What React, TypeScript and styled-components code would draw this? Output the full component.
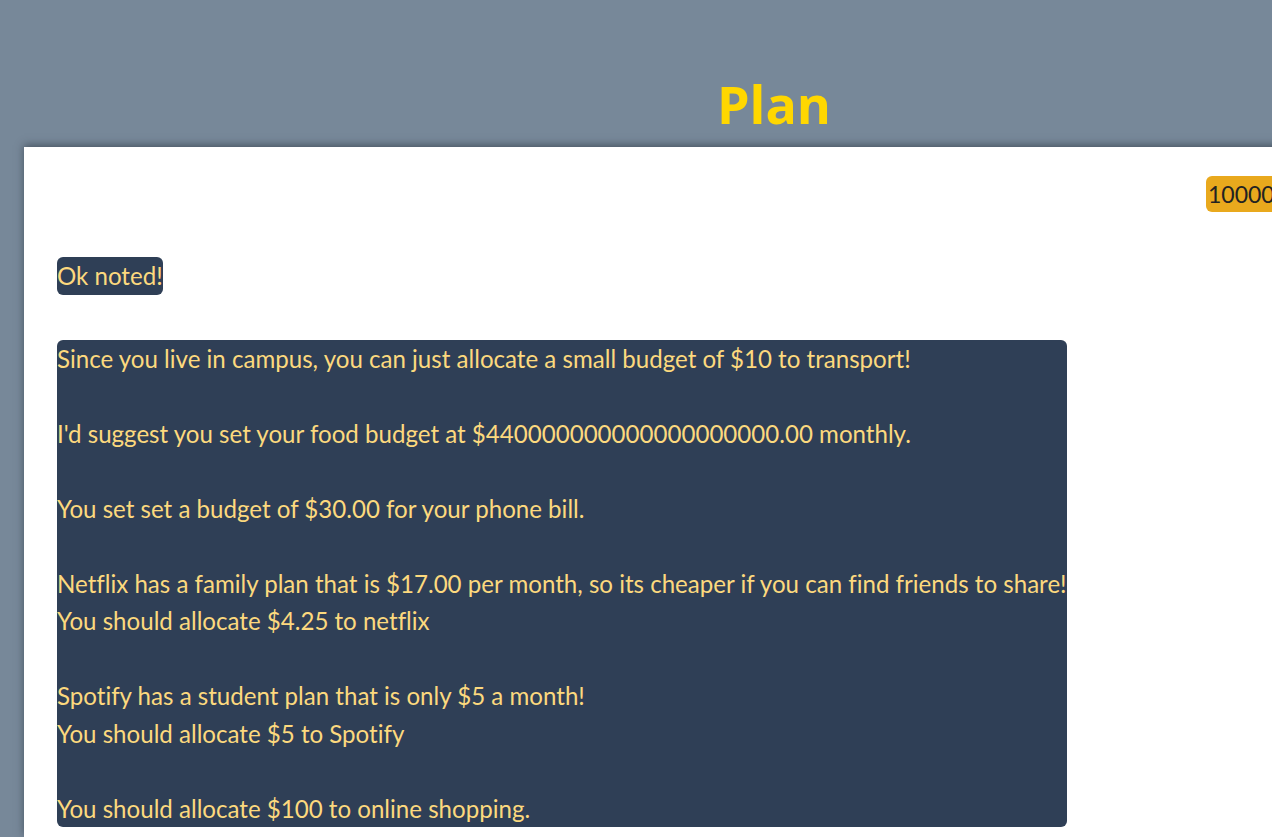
import React from "react";
import styled, { createGlobalStyle } from "styled-components";

const Global = createGlobalStyle`
  html, body {
    margin: 0;
    padding: 0;
    background: #778899;
    overflow: hidden;
    font-family: "Lato", "Open Sans", sans-serif;
    font-variant-ligatures: none;
  }
`;

const Page = styled.div`
  width: 1272px;
  height: 837px;
  display: flex;
  flex-direction: column;
  overflow: hidden;
`;

const Header = styled.header`
  height: 147px;
  display: flex;
  align-items: flex-end;
  justify-content: center;
  padding-left: 276px;
  box-sizing: border-box;
`;

const Title = styled.h1`
  margin: 0 0 12px;
  font-family: "Open Sans", sans-serif;
  font-size: 52px;
  font-weight: 700;
  color: #ffd700;
  line-height: 1.2;
`;

const Panel = styled.main`
  margin-left: 24px;
  width: 1300px;
  flex: 1;
  background: #ffffff;
  box-shadow: 0 -2px 8px rgba(40, 50, 60, 0.6);
  padding: 29px 0 0 33px;
  box-sizing: border-box;
  display: flex;
  flex-direction: column;
  align-items: flex-start;
`;

const BadgeRow = styled.div`
  align-self: stretch;
  display: flex;
  justify-content: flex-start;
  padding-left: 1149px;
`;

const Badge = styled.span`
  background: #e9a91d;
  color: #222;
  font-size: 23px;
  line-height: 36px;
  padding: 0 8px 0 2px;
  border-radius: 6px;
`;

const Bubble = styled.div`
  margin-top: 45px;
  background: #2f3f56;
  color: #fcd97e;
  font-size: 24.1px;
  line-height: 37.5px;
  border-radius: 6px;
  white-space: pre-line;
  max-width: 1100px;
`;

const messages = [
  "Ok noted!",
  "Since you live in campus, you can just allocate a small budget of $10 to transport!\n\nI'd suggest you set your food budget at $440000000000000000000.00 monthly.\n\nYou set set a budget of $30.00 for your phone bill.\n\nNetflix has a family plan that is $17.00 per month, so its cheaper if you can find friends to share!\nYou should allocate $4.25 to netflix\n\nSpotify has a student plan that is only $5 a month!\nYou should allocate $5 to Spotify\n\nYou should allocate $100 to online shopping.",
];

export default function App() {
  return (
    <Page>
      <Global />
      <Header>
        <Title>Plan</Title>
      </Header>
      <Panel>
        <BadgeRow>
          <Badge>10000</Badge>
        </BadgeRow>
        {messages.map((m, i) => (
          <Bubble key={i}>{m}</Bubble>
        ))}
      </Panel>
    </Page>
  );
}
